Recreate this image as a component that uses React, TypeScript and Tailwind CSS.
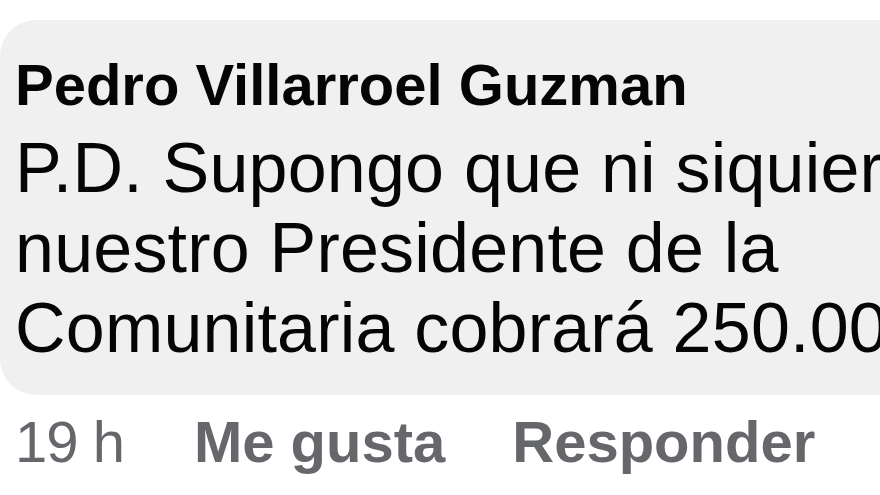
export default function App() {
  return (
    <div
      className="w-[880px] h-[495px] overflow-hidden bg-white"
      style={{ fontFamily: '"Liberation Sans", Arial, sans-serif' }}
    >
      <div className="mt-[20px] w-[1100px] rounded-[36px] bg-[#f0f0f0] pl-[15px] pt-[30px] pb-[27px] text-[#050505]">
        <div className="whitespace-nowrap text-[58px] font-bold leading-[70px]">
          Pedro Villarroel Guzman
        </div>
        <div className="mt-[8px] whitespace-nowrap text-[70px] leading-[80px] tracking-[0.2px]">
          <div>P.D. Supongo que ni siquiera</div>
          <div>nuestro Presidente de la</div>
          <div>Comunitaria cobrará 250.000</div>
        </div>
      </div>
      <div className="mt-[12px] flex gap-[67px] whitespace-nowrap pl-[15px] text-[58px] leading-[70px] text-[#65676b]">
        <span className="mr-[3px] tracking-[-1px]">19 h</span>
        <span className="font-bold">Me gusta</span>
        <span className="font-bold">Responder</span>
      </div>
    </div>
  );
}
